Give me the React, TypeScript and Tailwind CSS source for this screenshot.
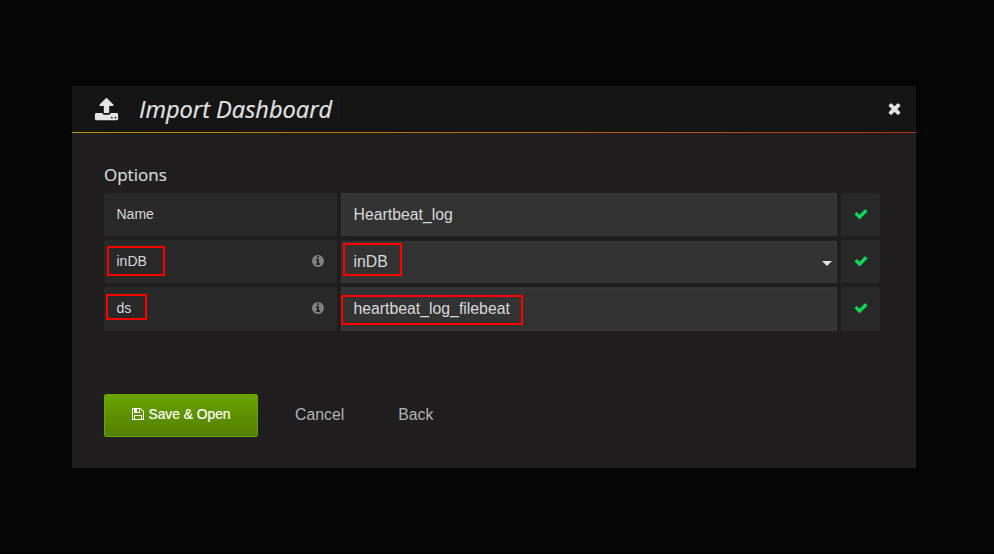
import type { ReactNode } from "react";

const paths = {
  upload:
    "M1344 1472q0-26-19-45t-45-19-45 19-19 45 19 45 45 19 45-19 19-45zm256 0q0-26-19-45t-45-19-45 19-19 45 19 45 45 19 45-19 19-45zm128-224v320q0 40-28 68t-68 28h-1472q-40 0-68-28t-28-68v-320q0-40 28-68t68-28h427q21 56 70.5 92t110.5 36h256q61 0 110.5-36t70.5-92h427q40 0 68 28t28 68zm-325-648q-17 40-59 40h-256v448q0 26-19 45t-45 19h-256q-26 0-45-19t-19-45v-448h-256q-42 0-59-40-17-39 14-69l448-448q18-19 45-19t45 19l448 448q31 30 14 69z",
  close:
    "M1490 1322q0 40-28 68l-136 136q-28 28-68 28t-68-28l-294-294-294 294q-28 28-68 28t-68-28l-136-136q-28-28-28-68t28-68l294-294-294-294q-28-28-28-68t28-68l136-136q28-28 68-28t68 28l294 294 294-294q28-28 68-28t68 28l136 136q28 28 28 68t-28 68l-294 294 294 294q28 28 28 68z",
  check:
    "M1671 566q0 40-28 68l-724 724-136 136q-28 28-68 28t-68-28l-136-136-362-362q-28-28-28-68t28-68l136-136q28-28 68-28t68 28l294 295 656-657q28-28 68-28t68 28l136 136q28 28 28 68z",
  info: "M1152 1376v-160q0-14-9-23t-23-9h-96v-512q0-14-9-23t-23-9h-320q-14 0-23 9t-9 23v160q0 14 9 23t23 9h96v320h-96q-14 0-23 9t-9 23v160q0 14 9 23t23 9h448q14 0 23-9t9-23zm-128-896v-160q0-14-9-23t-23-9h-192q-14 0-23 9t-9 23v160q0 14 9 23t23 9h192q14 0 23-9t9-23zm640 416q0 209-103 385.5t-279.5 279.5-385.5 103-385.5-103-279.5-279.5-103-385.5 103-385.5 279.5-279.5 385.5-103 385.5 103 279.5 279.5 103 385.5z",
  save: "M512 1536h768v-384h-768v384zm896 0h128v-896q0-14-10-38.5t-20-34.5l-281-281q-10-10-34-20t-39-10v416q0 40-28 68t-68 28h-576q-40 0-68-28t-28-68v-416h-128v1280h128v-416q0-40 28-68t68-28h832q40 0 68 28t28 68v416zm-384-928v-320q0-13-9.5-22.5t-22.5-9.5h-192q-13 0-22.5 9.5t-9.5 22.5v320q0 13 9.5 22.5t22.5 9.5h192q13 0 22.5-9.5t9.5-22.5zm640 32v928q0 40-28 68t-68 28h-1344q-40 0-68-28t-28-68v-1344q0-40 28-68t68-28h928q40 0 88 20t76 48l280 280q28 28 48 76t20 88z",
};

function Icon({ name, className }: { name: keyof typeof paths; className: string }) {
  return (
    <svg viewBox="0 0 1792 1792" fill="currentColor" className={`shrink-0 overflow-visible ${className}`}>
      <path d={paths[name]} />
    </svg>
  );
}

type RowProps = {
  label: string;
  info?: boolean;
  height: string;
  fieldClass?: string;
  children: ReactNode;
  mark?: string;
};

function OptionRow({ label, info, height, fieldClass = "", children, mark }: RowProps) {
  return (
    <div className={`flex gap-1 ${height}`}>
      <div className="relative flex h-full w-[233px] items-start justify-between rounded-[2px] bg-[#292929] pr-3 pl-[12.5px] text-[14px] leading-[42px] text-[#d8d9da]">
        {label}
        {info && <Icon name="info" className="mt-[14px] size-[14px] text-[#808080]" />}
        {mark && <span className={`absolute border-2 border-[#ff0000] ${mark}`} />}
      </div>
      <div
        className={`relative flex w-[496px] items-start justify-between bg-[#333333] pr-[5px] pl-[12.5px] text-[15.8px] leading-[44px] text-[#d8d9da] shadow-[inset_0_0_3px_1px_#3a3a3a] ${fieldClass}`}
      >
        {children}
      </div>
      <div className="flex h-full w-[39px] items-start justify-center rounded-[2px] bg-[#292929]">
        <Icon
          name="check"
          className="mt-[14px] size-[14px] stroke-[#10d957] stroke-[70px] text-[#10d957]"
        />
      </div>
    </div>
  );
}

export default function App() {
  return (
    <div className="h-[554px] w-[994px] border-b border-black bg-[#050505] pt-[86px] pl-[72px] font-['Liberation_Sans',Arial,sans-serif]">
      <div className="h-[382px] w-[844px] bg-[#201e1f]">
        <header className="flex h-[46px] items-center bg-[#151515] pl-[22.5px] text-[#e3e3e3]">
          <Icon name="upload" className="-ml-[0.5px] size-[25px]" />
          <h1 className="ml-[20px] w-[199px] font-['Open_Sans','Noto_Sans',sans-serif] text-[23.6px] leading-[46px] whitespace-nowrap italic [-webkit-text-stroke:0.2px_#e3e3e3]">
            Import Dashboard
          </h1>
          <span className="h-[33px] w-px bg-[#101c2b]" />
          <Icon
            name="close"
            className="mr-[13.5px] mb-[2px] ml-auto size-[17px] stroke-[#e3e3e3] stroke-[40px]"
          />
        </header>
        <div className="h-px bg-linear-to-r from-[#b8960b] to-[#b8330b]" />
        <div className="pl-8">
          <h2 className="h-[60px] pt-[30px] font-['Open_Sans','Noto_Sans',sans-serif] text-[17px] leading-6 text-[#d8d9da] [-webkit-text-stroke:0.2px_#d8d9da]">
            Options
          </h2>
          <div className="flex flex-col gap-1">
            <OptionRow label="Name" height="h-[43px]">
              <span>Heartbeat_log</span>
            </OptionRow>
            <OptionRow
              label="inDB"
              info
              height="h-[43px]"
              mark="top-[6px] left-[3px] h-[30px] w-[58px]"
              fieldClass="mt-px"
            >
              <span className="-mt-px">inDB</span>
              <span className="mt-[20px] border-x-[5px] border-t-[5px] border-x-transparent border-t-[#e3e3e3]" />
              <span className="absolute top-[2px] left-[2px] h-[33px] w-[59px] border-2 border-[#ff0000]" />
            </OptionRow>
            <OptionRow
              label="ds"
              info
              height="h-[44px]"
              mark="top-[7px] left-[2px] h-[26px] w-[41px]"
            >
              <span>heartbeat_log_filebeat</span>
              <span className="absolute top-[8px] left-0 h-[30px] w-[182px] border-2 border-[#ff0000]" />
            </OptionRow>
          </div>
          <div className="mt-[63px] flex h-[43px] items-start text-[15.8px] leading-[41px] text-[#b3b3b3]">
            <button className="flex h-full w-[154px] items-start justify-center rounded-[2px] border border-[#69a300] bg-linear-to-b from-[#69a300] to-[#527f00] text-[13.8px] leading-[39px] text-white">
              <Icon name="save" className="mt-[12px] mr-[3px] size-[14px]" />
              <span className="[-webkit-text-stroke:0.2px_white]">Save &amp; Open</span>
            </button>
            <button className="ml-[37px]">Cancel</button>
            <button className="ml-[54px]">Back</button>
          </div>
        </div>
      </div>
    </div>
  );
}
